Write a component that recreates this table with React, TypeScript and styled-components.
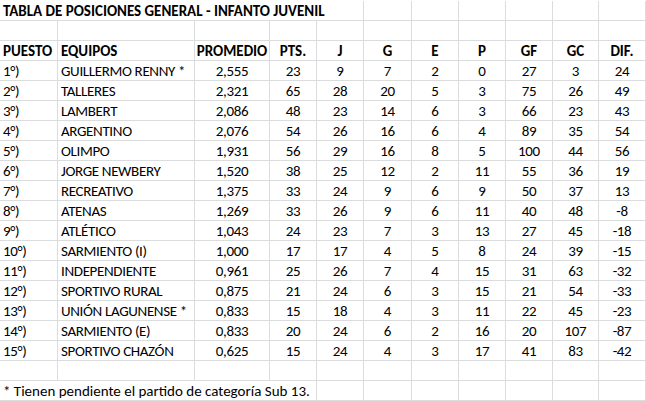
import React from "react";
import styled, { createGlobalStyle } from "styled-components";

const Global = createGlobalStyle`
  html, body { margin: 0; padding: 0; background: #ffffff; }
  body { font-family: Carlito, Lato, "Liberation Sans", sans-serif; }
`;

const COLS = "58px 137px 75px 47px 47px 48px 47px 47px 47px 46px 47px";
const LINE = "#dadcdd";

const Sheet = styled.div`
  width: 646px;
  height: 401px;
  padding-top: 1px;
  box-sizing: border-box;
  overflow: hidden;
  background: #fff;
  color: #000;
  font-family: Carlito, Lato, "Liberation Sans", sans-serif;
  font-size: 15px;
`;

const Row = styled.div`
  display: grid;
  grid-template-columns: ${COLS};
  height: 20px;
`;

const Cell = styled.div<{
  $align?: "left" | "center" | "right";
  $bold?: boolean;
  $span?: number;
  $tight?: boolean;
}>`
  grid-column: span ${(p) => p.$span ?? 1};
  box-sizing: border-box;
  height: 20px;
  border-right: 1px solid ${LINE};
  border-bottom: 1px solid ${LINE};
  padding: 0 3px;
  display: flex;
  align-items: flex-end;
  justify-content: ${(p) =>
    p.$align === "center" ? "center" : p.$align === "right" ? "flex-end" : "flex-start"};
  font-weight: ${(p) => (p.$bold ? 700 : 400)};
  letter-spacing: ${(p) => (p.$tight ? "-0.35px" : "0")};
  white-space: nowrap;
  overflow: visible;
  line-height: 18px;
`;

const rows: (string | number)[][] = [
  ["1°)", "GUILLERMO RENNY *", "2,555", 23, 9, 7, 2, 0, 27, 3, 24],
  ["2°)", "TALLERES", "2,321", 65, 28, 20, 5, 3, 75, 26, 49],
  ["3°)", "LAMBERT", "2,086", 48, 23, 14, 6, 3, 66, 23, 43],
  ["4°)", "ARGENTINO", "2,076", 54, 26, 16, 6, 4, 89, 35, 54],
  ["5°)", "OLIMPO", "1,931", 56, 29, 16, 8, 5, 100, 44, 56],
  ["6°)", "JORGE NEWBERY", "1,520", 38, 25, 12, 2, 11, 55, 36, 19],
  ["7°)", "RECREATIVO", "1,375", 33, 24, 9, 6, 9, 50, 37, 13],
  ["8°)", "ATENAS", "1,269", 33, 26, 9, 6, 11, 40, 48, -8],
  ["9°)", "ATLÉTICO", "1,043", 24, 23, 7, 3, 13, 27, 45, -18],
  ["10°)", "SARMIENTO (I)", "1,000", 17, 17, 4, 5, 8, 24, 39, -15],
  ["11°)", "INDEPENDIENTE", "0,961", 25, 26, 7, 4, 15, 31, 63, -32],
  ["12°)", "SPORTIVO RURAL", "0,875", 21, 24, 6, 3, 15, 21, 54, -33],
  ["13°)", "UNIÓN LAGUNENSE *", "0,833", 15, 18, 4, 3, 11, 22, 45, -23],
  ["14°)", "SARMIENTO (E)", "0,833", 20, 24, 6, 2, 16, 20, 107, -87],
  ["15°)", "SPORTIVO CHAZÓN", "0,625", 15, 24, 4, 3, 17, 41, 83, -42],
];

const headers = ["PTS.", "J", "G", "E", "P", "GF", "GC", "DIF."];

const Empty = ({ n }: { n: number }) => (
  <>
    {Array.from({ length: n }).map((_, i) => (
      <Cell key={i} />
    ))}
  </>
);

export default function App() {
  return (
    <>
      <Global />
      <Sheet>
        <Row>
          <Cell $span={5} $bold>
            TABLA DE POSICIONES GENERAL - INFANTO JUVENIL
          </Cell>
          <Empty n={6} />
        </Row>
        <Row>
          <Empty n={11} />
        </Row>
        <Row>
          <Cell $bold>PUESTO</Cell>
          <Cell $bold>EQUIPOS</Cell>
          <Cell $bold $align="center">PROMEDIO</Cell>
          {headers.map((h) => (
            <Cell key={h} $bold $align="center">
              {h}
            </Cell>
          ))}
        </Row>
        {rows.map((r) => (
          <Row key={String(r[0])}>
            <Cell $tight>{r[0]}</Cell>
            <Cell $tight>{r[1]}</Cell>
            {r.slice(2).map((v, i) => (
              <Cell key={i} $align="center" $tight>
                {v}
              </Cell>
            ))}
          </Row>
        ))}
        <Row>
          <Empty n={11} />
        </Row>
        <Row>
          <Cell $span={4}>* Tienen pendiente el partido de categoría Sub 13.</Cell>
          <Empty n={7} />
        </Row>
      </Sheet>
    </>
  );
}
